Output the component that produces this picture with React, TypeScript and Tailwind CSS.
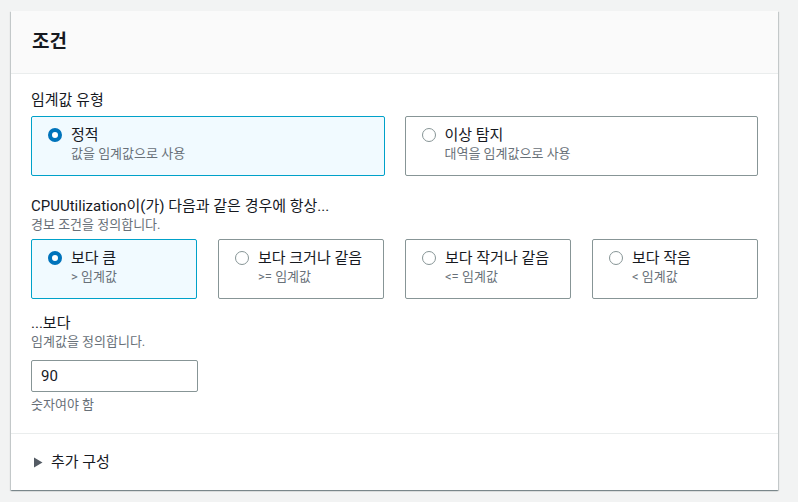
import { useState } from 'react';

type Option = { id: string; label: string; desc: string };

const thresholdTypes: Option[] = [
  { id: 'static', label: '정적', desc: '값을 임계값으로 사용' },
  { id: 'anomaly', label: '이상 탐지', desc: '대역을 임계값으로 사용' },
];

const operators: Option[] = [
  { id: 'gt', label: '보다 큼', desc: '> 임계값' },
  { id: 'gte', label: '보다 크거나 같음', desc: '>= 임계값' },
  { id: 'lte', label: '보다 작거나 같음', desc: '<= 임계값' },
  { id: 'lt', label: '보다 작음', desc: '< 임계값' },
];

function Radio({ checked }: { checked: boolean }) {
  return checked ? (
    <span className="mt-[3px] block h-[14px] w-[14px] shrink-0 rounded-full border-[4px] border-[#0073bb] bg-white" />
  ) : (
    <span className="mt-[3px] block h-[14px] w-[14px] shrink-0 rounded-full border border-[#879596] bg-white" />
  );
}

function Tile({ option, checked, onSelect }: { option: Option; checked: boolean; onSelect: () => void }) {
  return (
    <button
      type="button"
      onClick={onSelect}
      className={
        checked
          ? 'flex h-[60px] items-start gap-[9px] rounded-[2px] border border-[#00a1c9] bg-[#f1faff] pl-[16px] pt-[8px] text-left'
          : 'flex h-[60px] items-start gap-[9px] rounded-[2px] border border-[#879596] bg-white pl-[16px] pt-[8px] text-left'
      }
    >
      <Radio checked={checked} />
      <span className="flex flex-col">
        <span className="text-[15px] leading-[20px] text-[#16191f]">{option.label}</span>
        <span className="text-[13px] leading-[18px] text-[#687078]">{option.desc}</span>
      </span>
    </button>
  );
}

export default function App() {
  const [type, setType] = useState('static');
  const [op, setOp] = useState('gt');
  const [value, setValue] = useState('90');

  return (
    <div className="min-h-[502px] bg-[#f2f3f3] px-[11px] pt-[11px] font-['Roboto','Noto_Sans_CJK_KR',sans-serif] text-[#16191f]">
      <div className="w-[767px] bg-white shadow-[0_1px_1px_0_rgba(0,28,36,0.3),1px_1px_1px_0_rgba(0,28,36,0.15),-1px_1px_1px_0_rgba(0,28,36,0.15)]">
        <div className="flex h-[63px] items-center border-b border-[#eaeded] bg-[#fafafa] px-[21px]">
          <h2 className="text-[19px] font-bold leading-[22px]">조건</h2>
        </div>

        <div className="px-[20px] pt-[16px] pb-[19px]">
          <div className="text-[15px] leading-[20px]">임계값 유형</div>
          <div className="mt-[6px] grid grid-cols-2 gap-[20px]">
            {thresholdTypes.map(o => (
              <Tile key={o.id} option={o} checked={type === o.id} onSelect={() => setType(o.id)} />
            ))}
          </div>

          <div className="mt-[20px] text-[15px] leading-[20px]">CPUUtilization이(가) 다음과 같은 경우에 항상...</div>
          <div className="text-[13px] leading-[18px] text-[#687078]">경보 조건을 정의합니다.</div>
          <div className="mt-[5px] grid grid-cols-4 gap-[21px]">
            {operators.map(o => (
              <Tile key={o.id} option={o} checked={op === o.id} onSelect={() => setOp(o.id)} />
            ))}
          </div>

          <div className="mt-[14px] text-[15px] leading-[20px]">...보다</div>
          <div className="text-[13px] leading-[18px] text-[#687078]">임계값을 정의합니다.</div>
          <input
            value={value}
            onChange={e => setValue(e.target.value)}
            className="mt-[9px] block h-[32px] w-[167px] rounded-[2px] border border-[#879596] px-[9px] text-[15px] text-[#16191f] focus:outline-none"
          />
          <div className="mt-[4px] text-[13px] leading-[18px] text-[#687078]">숫자여야 함</div>
        </div>

        <div className="flex h-[57px] items-center gap-[8px] border-t border-[#eaeded] px-[22px]">
          <svg width="10" height="11" viewBox="0 0 10 11" className="text-[#545b64]">
            <path d="M1 0.5 L9.5 5.5 L1 10.5 Z" fill="currentColor" />
          </svg>
          <span className="text-[15px] leading-[20px] text-[#16191f]">추가 구성</span>
        </div>
      </div>
    </div>
  );
}
